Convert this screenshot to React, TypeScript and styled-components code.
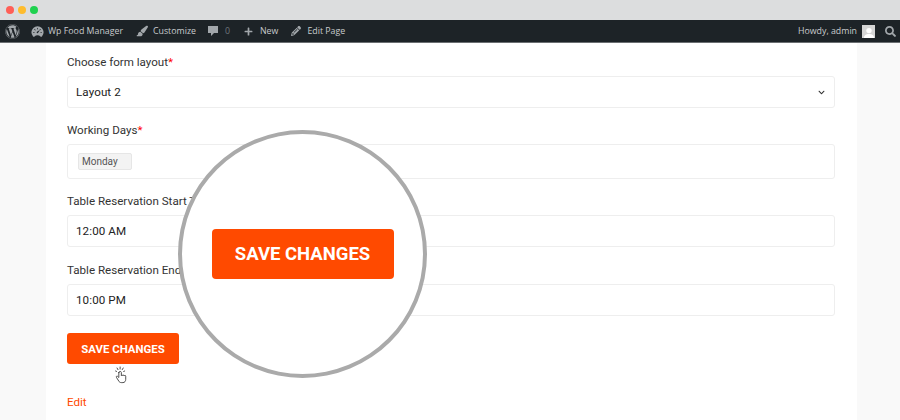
import React from "react";
import styled, { createGlobalStyle } from "styled-components";
import { FaWordpress, FaPlus, FaSearch, FaChevronDown } from "react-icons/fa";
import { IoSpeedometer } from "react-icons/io5";
import { FaPaintbrush, FaPencil } from "react-icons/fa6";

const Global = createGlobalStyle`
  html, body { margin: 0; padding: 0; background: #f9f9f9; }
  body { font-family: Roboto, "Liberation Sans", sans-serif; overflow: hidden; }
`;
const Page = styled.div`position: relative; width: 900px; height: 420px; overflow: hidden; display: flex; flex-direction: column;`;
const Chrome = styled.div`height: 20px; flex: none; background: #dcddde; display: flex; align-items: center; gap: 4px; padding-left: 6px; box-sizing: border-box;`;
const Dot = styled.span<{ $c: string }>`width: 8px; height: 8px; border-radius: 50%; background: ${p => p.$c};`;
const AdminBar = styled.div`height: 23px; flex: none; box-sizing: border-box; background: #1d2327; border-bottom: 1px solid #6b6f72; display: flex; align-items: center; padding: 0 4px 0 5px; color: #c8cbcd; font-size: 8.8px; font-family: "Open Sans", sans-serif;`;
const BarItem = styled.span<{ $gap?: number; $ml?: number }>`display: inline-flex; align-items: center; gap: ${p => p.$gap ?? 6}px; margin-left: ${p => p.$ml ?? 0}px; white-space: nowrap; svg { color: #a2a7ab; flex: none; }`;
const Spacer = styled.span`flex: 1;`;
const Zero = styled.span`color: #6f767b;`;
const Avatar = styled.span`width: 13px; height: 13px; background: #d5d5d5; display: inline-flex; align-items: flex-end; justify-content: center; overflow: hidden; svg { color: #fff; }`;
const Body = styled.div`flex: 1; display: flex; justify-content: center; padding-left: 3px;`;
const Card = styled.main`width: 768px; background: #fff; padding: 12px 22px 0 21px; color: #2b2b2b;`;
const Label = styled.div`font-size: 11.6px; line-height: 14px; margin-bottom: 7px; color: #333;
  b { color: #f00; font-weight: 400; }`;
const Field = styled.div<{ $h: number; $mb: number }>`height: ${p => p.$h}px; margin-bottom: ${p => p.$mb}px; box-sizing: border-box; border: 1px solid #eeeeee; border-radius: 3px; display: flex; align-items: center; justify-content: space-between; padding: 0 9px 0 8px; font-size: 11.6px; letter-spacing: 0.1px; color: #222; svg { color: #333; }`;
const Tag = styled.span`width: 54px; height: 17px; margin-left: 2px; box-sizing: border-box; background: #f3f3f3; border: 1px solid #e6e6e6; border-radius: 2px; font-size: 10px; line-height: 15px; padding-left: 3px; color: #555; letter-spacing: 0;`;
const Save = styled.button<{ $big?: boolean }>`display: block; border: 0; background: #ff4a00; color: #fff; font-family: Roboto, sans-serif; font-weight: 700; text-transform: uppercase; padding: 0;
  width: ${p => (p.$big ? 182 : 112)}px; height: ${p => (p.$big ? 50 : 31)}px; border-radius: ${p => (p.$big ? 4 : 3)}px; font-size: ${p => (p.$big ? 18.5 : 11.4)}px;`;
const Cursor = styled.div`height: 38px; padding-left: 47px; display: flex; align-items: flex-start; margin-top: 2px;`;
const EditLink = styled.a`display: block; margin-top: -9px; font-size: 11.6px; color: #ff4a00;`;
const Lens = styled.div`position: absolute; left: 178px; top: 130px; width: 249px; height: 248px; box-sizing: border-box; border-radius: 50%; border: 4px solid #aaaaaa; background: #fff; display: flex; align-items: center; justify-content: center;`;

const Hand = () => (
  <svg width="14" height="18" viewBox="0 0 16 18" preserveAspectRatio="none" fill="none" stroke="#444" strokeWidth="1" strokeLinecap="round" strokeLinejoin="round">
    <path d="M5.5 6.5 V11.5 L4 10.3 C3.2 9.7 2.2 10.5 2.8 11.4 L5.4 15 C6 16 7 16.6 8.3 16.6 H10.2 C12.2 16.6 13.4 15.2 13.4 13.3 V10.2 C13.4 9.2 12 9.1 11.8 10 C11.8 9 10.3 8.8 10.1 9.8 C10 8.8 8.5 8.7 8.4 9.7 V6.5 C8.4 5 5.5 5 5.5 6.5 Z" fill="#fff"/>
    <path d="M7 1 V3 M3.5 2 L4.5 3.6 M10.5 2 L9.5 3.6 M1.8 5 L3.4 5.6 M12.2 5 L10.6 5.6" strokeDasharray="1.2 .6"/>
  </svg>
);

const Person = () => (
  <svg width="10" height="11" viewBox="0 0 10 11" fill="currentColor"><circle cx="5" cy="3.6" r="2.7"/><path d="M0 11c0-3 2-4 5-4s5 1 5 4z"/></svg>
);

const Bubble = () => (
  <svg width="10" height="10" viewBox="0 0 10 10" fill="currentColor"><path d="M0 0h10v7H6L3 10V7H0z"/></svg>
);

export default function App() {
  return (
    <Page>
      <Global />
      <Chrome>
        <Dot $c="#ff5f57" /><Dot $c="#febc2e" /><Dot $c="#1fd14f" />
      </Chrome>
      <AdminBar>
        <BarItem><FaWordpress size={15} /></BarItem>
        <BarItem $ml={11} $gap={4}><IoSpeedometer size={13} />Wp Food Manager</BarItem>
        <BarItem $ml={13} $gap={5}><FaPaintbrush size={12} />Customize</BarItem>
        <BarItem $ml={12} $gap={7}><Bubble /><Zero>0</Zero></BarItem>
        <BarItem $ml={14} $gap={7}><FaPlus size={9} />New</BarItem>
        <BarItem $ml={13} $gap={6}><FaPencil size={10} />Edit Page</BarItem>
        <Spacer />
        <BarItem $gap={5}>Howdy, admin<Avatar><Person /></Avatar></BarItem>
        <BarItem $ml={10}><FaSearch size={11} /></BarItem>
      </AdminBar>
      <Body>
        <Card>
          <Label>Choose form layout<b>*</b></Label>
          <Field $h={32} $mb={15}>Layout 2<FaChevronDown size={7} /></Field>
          <Label>Working Days<b>*</b></Label>
          <Field $h={35} $mb={15}><Tag>Monday</Tag></Field>
          <Label>Table Reservation Start Time<b>*</b></Label>
          <Field $h={32} $mb={16}>12:00 AM</Field>
          <Label>Table Reservation End Time<b>*</b></Label>
          <Field $h={32} $mb={17}>10:00 PM</Field>
          <Save>Save Changes</Save>
          <Cursor><Hand /></Cursor>
          <EditLink>Edit</EditLink>
        </Card>
      </Body>
      <Lens><Save $big>Save Changes</Save></Lens>
    </Page>
  );
}
